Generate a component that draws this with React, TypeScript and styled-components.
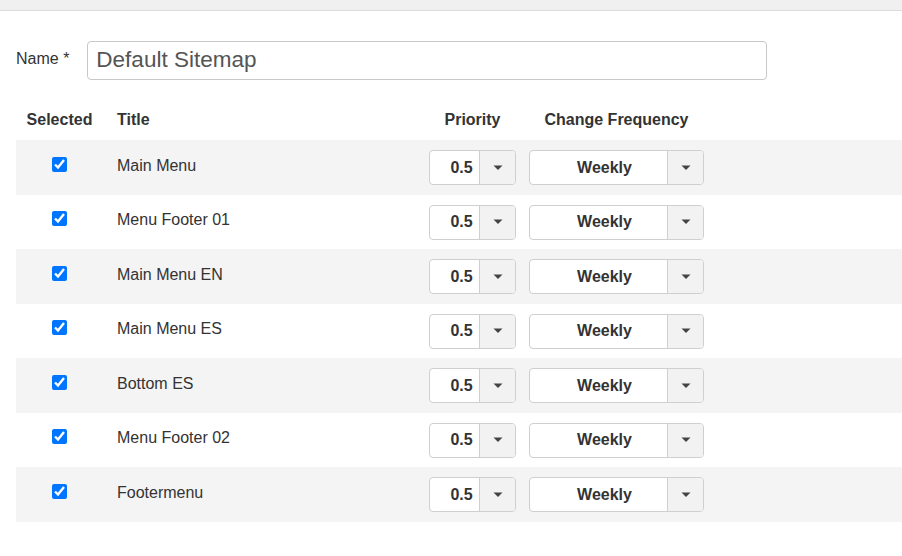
import styled, { createGlobalStyle } from 'styled-components';

const menus = [
  'Main Menu',
  'Menu Footer 01',
  'Main Menu EN',
  'Main Menu ES',
  'Bottom ES',
  'Menu Footer 02',
  'Footermenu',
];

const GlobalStyle = createGlobalStyle`
  html, body {
    margin: 0;
    padding: 0;
    background: #fff;
    font-family: "Liberation Sans", Arial, sans-serif;
    color: #333;
    overflow: hidden;
  }
`;

const Caret = () => (
  <svg width="10" height="6" viewBox="0 0 10 6">
    <path d="M0.5 0.5 L9.5 0.5 L5 5 Z" fill="#444" />
  </svg>
);

const App = () => {
  return (
    <Page>
      <GlobalStyle />
      <TopBar />
      <Content>
        <NameRow>
          <Label>Name *</Label>
          <NameInput defaultValue="Default Sitemap" />
        </NameRow>
        <HeaderRow>
          <HeadCell $align="center">Selected</HeadCell>
          <HeadCell $pad>Title</HeadCell>
          <HeadCell $align="center">Priority</HeadCell>
          <HeadCell $align="center">Change Frequency</HeadCell>
          <span />
        </HeaderRow>
        {menus.map((title, i) => (
          <Row key={title} $striped={i % 2 === 0}>
            <Cell $align="center">
              <Check type="checkbox" defaultChecked />
            </Cell>
            <Cell $pad>{title}</Cell>
            <Cell $align="center">
              <Select $width={87}>
                <SelectValue $shift={7}>0.5</SelectValue>
                <SelectToggle>
                  <Caret />
                </SelectToggle>
              </Select>
            </Cell>
            <Cell>
              <Select $width={175}>
                <SelectValue $shift={6}>Weekly</SelectValue>
                <SelectToggle>
                  <Caret />
                </SelectToggle>
              </Select>
            </Cell>
            <span />
          </Row>
        ))}
      </Content>
    </Page>
  );
};

const Page = styled.div`
  width: 902px;
  height: 556px;
  background: #fff;
`;

const TopBar = styled.div`
  height: 10px;
  background: #f0f0f0;
  border-bottom: 1px solid #dcdcdc;
`;

const Content = styled.div`
  padding: 30px 0 0 16px;
`;

const NameRow = styled.div`
  display: flex;
  align-items: center;
  gap: 18px;
  height: 38px;
`;

const Label = styled.label`
  font-size: 16px;
  color: #333;
  margin-top: -2px;
`;

const NameInput = styled.input`
  box-sizing: border-box;
  width: 680px;
  height: 39px;
  border: 1px solid #c8c8c8;
  border-radius: 4px;
  padding: 0 8px;
  font-family: "Liberation Sans", Arial, sans-serif;
  font-size: 22.5px;
  color: #555;
  outline: none;
`;

const gridColumns = '87px 313px 113px 175px 1fr';

const HeaderRow = styled.div`
  display: grid;
  grid-template-columns: ${gridColumns};
  align-items: center;
  height: 61px;
  padding-top: 21px;
  box-sizing: border-box;
`;

const HeadCell = styled.div<{ $align?: string; $pad?: boolean }>`
  font-size: 16px;
  font-weight: bold;
  color: #333;
  text-align: ${(p) => p.$align || 'left'};
  padding-left: ${(p) => (p.$pad ? '14px' : '0')};
  white-space: nowrap;
`;

const Row = styled.div<{ $striped: boolean }>`
  display: grid;
  grid-template-columns: ${gridColumns};
  align-items: center;
  height: 54.5px;
  background: ${(p) => (p.$striped ? '#f4f4f4' : '#fff')};
`;

const Cell = styled.div<{ $align?: string; $pad?: boolean }>`
  display: flex;
  align-items: center;
  justify-content: ${(p) => (p.$align === 'center' ? 'center' : 'flex-start')};
  padding-left: ${(p) => (p.$pad ? '14px' : '0')};
  font-size: 16px;
  color: #333;
  margin-top: ${(p) => (p.$pad ? '-3px' : '0')};
`;

const Check = styled.input`
  width: 15px;
  height: 15px;
  margin: -6px 0 0 0;
  accent-color: #0075ff;
`;

const Select = styled.div<{ $width: number }>`
  box-sizing: border-box;
  display: flex;
  width: ${(p) => p.$width}px;
  height: 35px;
  margin-top: 1px;
  border: 1px solid #cfcfcf;
  border-radius: 4px;
  background: #fff;
  overflow: hidden;
`;

const SelectValue = styled.div<{ $shift: number }>`
  flex: 1;
  display: flex;
  align-items: center;
  justify-content: center;
  padding-left: ${(p) => p.$shift * 2}px;
  font-size: 16px;
  font-weight: bold;
  color: #333;
`;

const SelectToggle = styled.div`
  width: 35px;
  display: flex;
  align-items: center;
  justify-content: center;
  background: #f2f2f2;
  border-left: 1px solid #cfcfcf;
`;

export default App;
